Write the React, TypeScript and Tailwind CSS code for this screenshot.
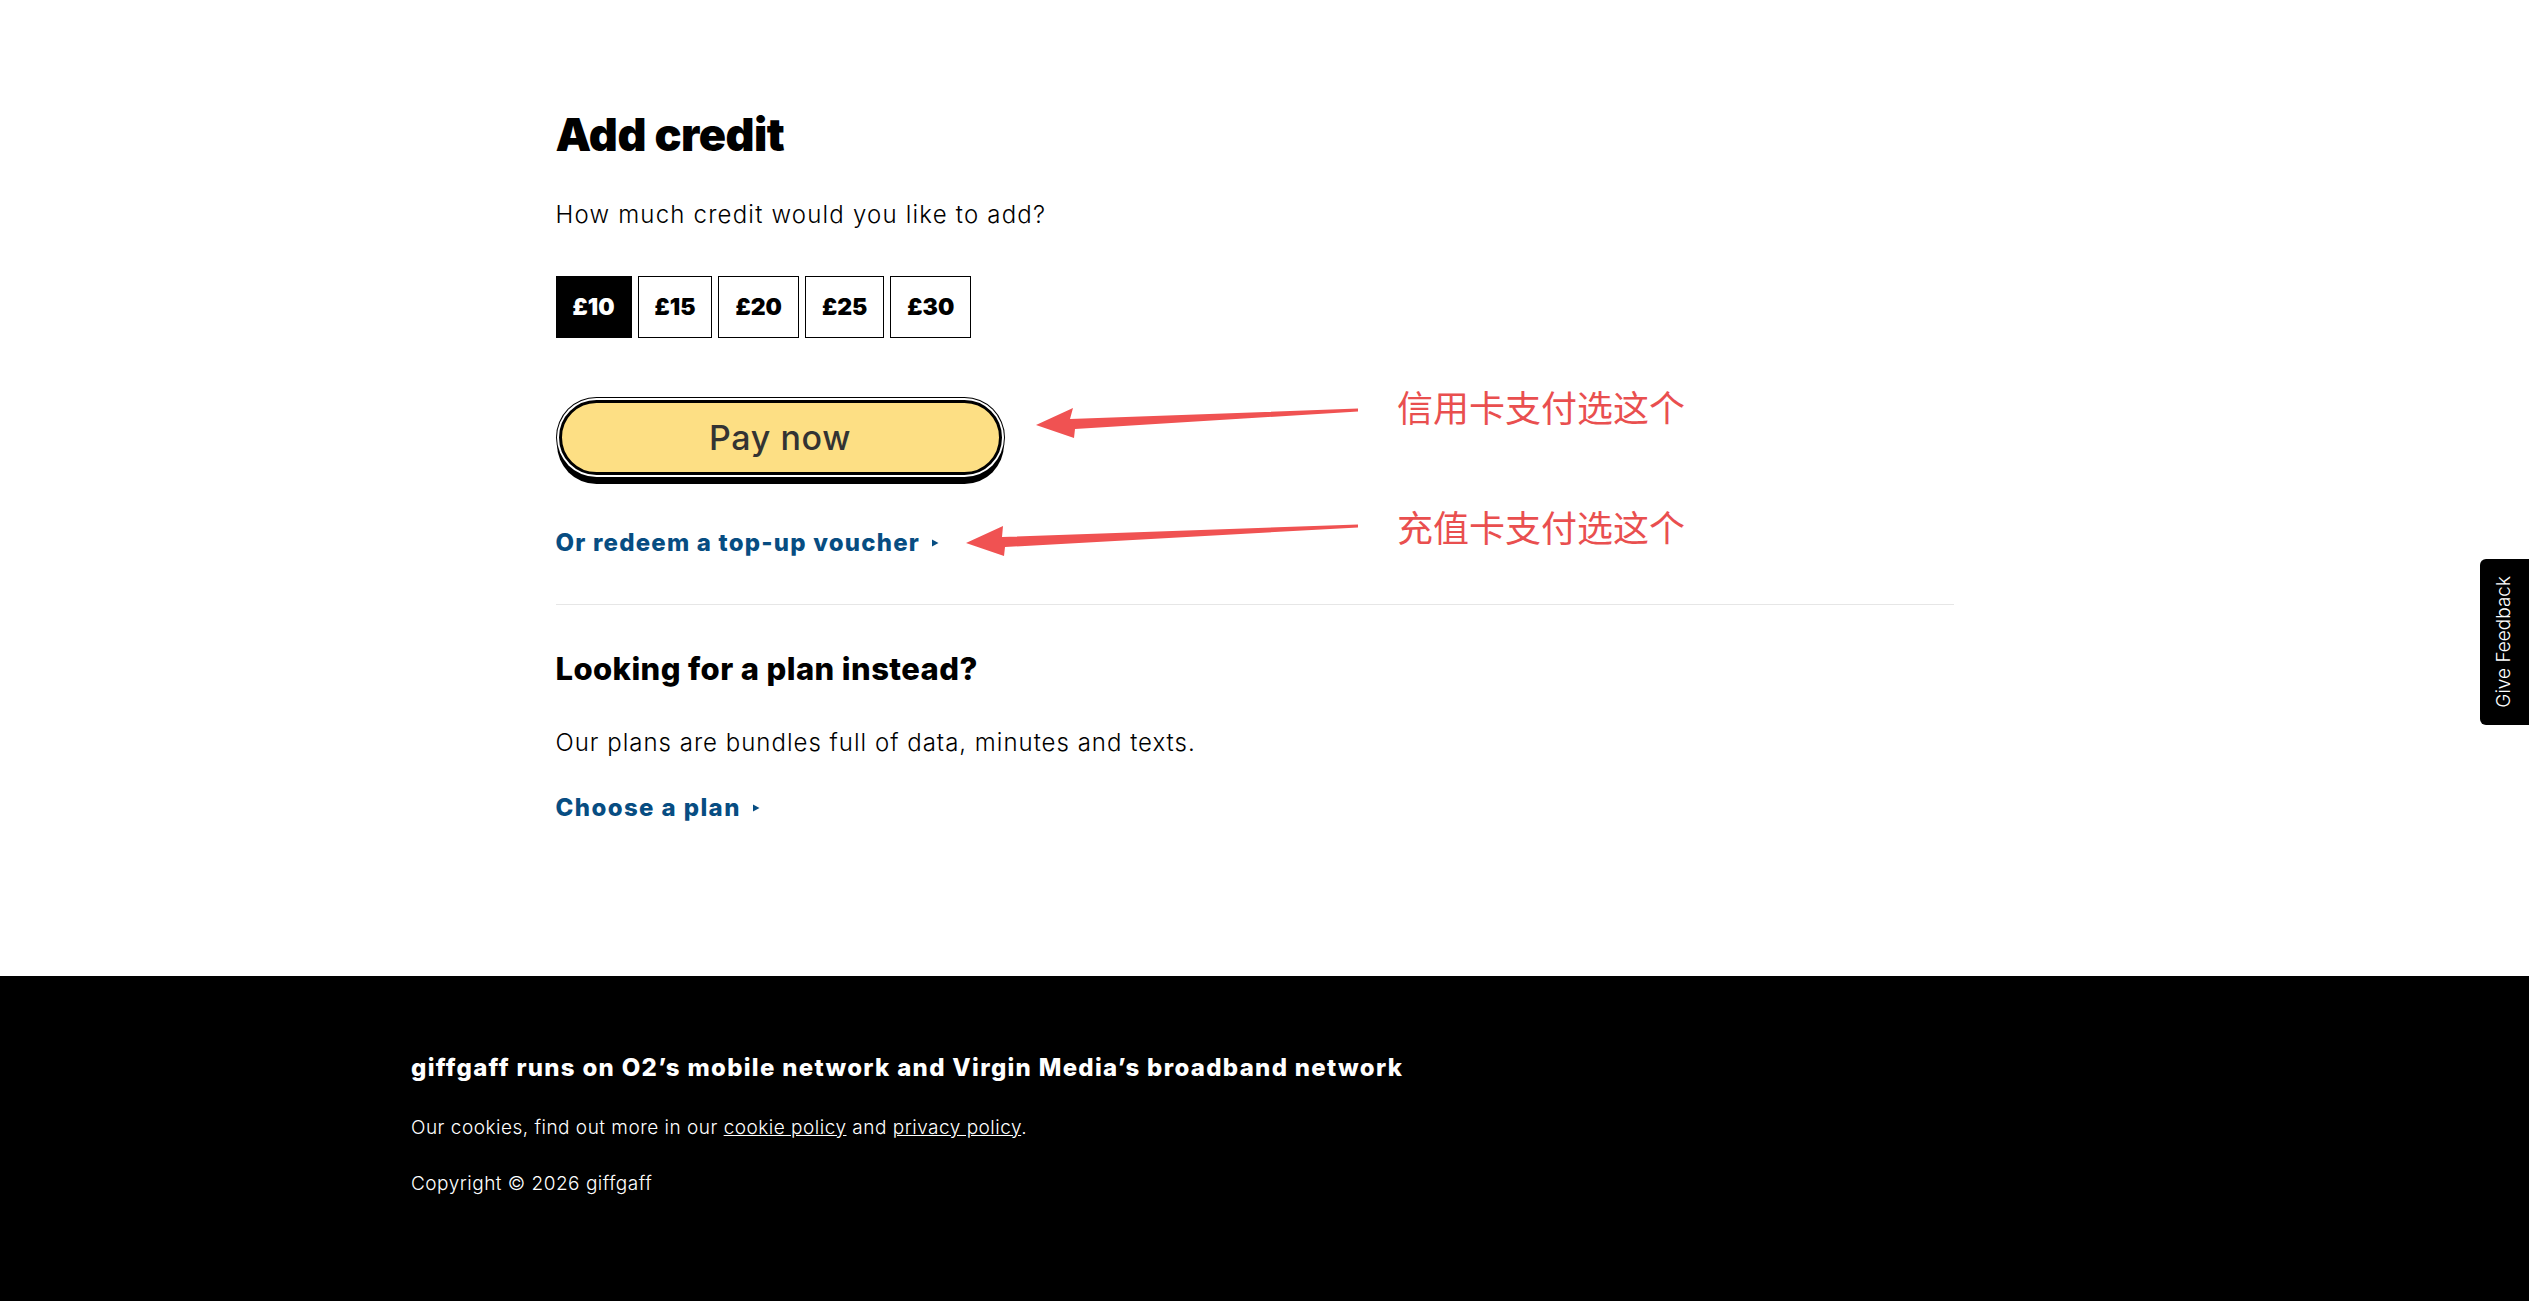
import { useState } from "react";

const amounts = [10, 15, 20, 25, 30];

function Caret() {
  return (
    <svg width="8" height="8" viewBox="0 0 8 8" className="ml-[11px] inline-block">
      <path d="M1 0.5 L7.5 4 L1 7.5 Z" fill="currentColor" />
    </svg>
  );
}

function Annotations() {
  // red arrows + notes that sit on top of the page
  return (
    <div className="pointer-events-none absolute left-0 top-0 w-[2529px] h-[976px]">
      <svg width="2529" height="976" className="absolute left-0 top-0">
        <polygon
          fill="#f05252"
          points="1036,425 1073,408 1070,419 1358,408.5 1358,411.5 1075,429 1074,438"
        />
        <polygon
          fill="#f05252"
          points="966,543 1003,526 1002,537 1358,524.5 1358,527.5 1005,547 1004,556"
        />
      </svg>
      <div className="absolute left-[1397px] top-[386px] text-[36px] leading-[40px] text-[#e94f4f] font-['Noto_Sans_CJK_SC',sans-serif]">
        信用卡支付选这个
      </div>
      <div className="absolute left-[1397px] top-[506px] text-[36px] leading-[40px] text-[#e94f4f] font-['Noto_Sans_CJK_SC',sans-serif]">
        充值卡支付选这个
      </div>
    </div>
  );
}

export default function App() {
  const [selected, setSelected] = useState(10);

  return (
    <div className="relative min-h-screen flex flex-col bg-white text-black font-['Inter',sans-serif]">
      <main className="flex-1 flex justify-center pr-[20px]">
        <div className="w-[1398px] pt-[107px] pb-[40px]">
          <h1 className="text-[45px] leading-[56px] font-black tracking-[-0.5px]">Add credit</h1>
          <p className="mt-[36px] text-[24px] leading-[32px] font-light tracking-[1.2px]">
            How much credit would you like to add?
          </p>

          <div className="mt-[45px] flex gap-[6px]">
            {amounts.map((a) => (
              <button
                key={a}
                onClick={() => setSelected(a)}
                className={
                  a === selected
                    ? "h-[62px] px-[16px] bg-black text-white text-[23px] font-black border border-black"
                    : "h-[62px] px-[16px] bg-white text-black text-[23px] font-black border border-black"
                }
              >
                £{a}
              </button>
            ))}
          </div>

          <div className="mt-[62px] pl-[3px]">
            <button className="w-[443px] h-[75px] rounded-full bg-[#fddf84] border-[3px] border-black text-[34px] font-medium tracking-[0.6px] text-[#333333] shadow-[0_0_0_2px_#fff,0_0_0_3px_#000,0_7px_0_2px_#000]">
              Pay now
            </button>
          </div>

          <a className="mt-[52px] flex items-center text-[24px] leading-[32px] font-extrabold tracking-[1.2px] text-[#074d82] cursor-pointer">
            Or redeem a top-up voucher
            <Caret />
          </a>

          <div className="mt-[45px] border-t border-[#e6e6e6]" />

          <h2 className="mt-[44px] text-[31px] leading-[40px] font-extrabold tracking-[0.4px]">
            Looking for a plan instead?
          </h2>
          <p className="mt-[38px] text-[24px] leading-[32px] font-light tracking-[1px]">
            Our plans are bundles full of data, minutes and texts.
          </p>
          <a className="mt-[33px] flex items-center text-[24px] leading-[32px] font-extrabold tracking-[1.4px] text-[#074d82] cursor-pointer">
            Choose a plan
            <Caret />
          </a>
        </div>
      </main>

      <footer className="h-[325px] bg-black text-white flex justify-center pr-[20px]">
        <div className="w-[1687px] pt-[76px]">
          <p className="text-[24px] leading-[32px] font-extrabold tracking-[1.3px]">
            giffgaff runs on O2’s mobile network and Virgin Media’s broadband network
          </p>
          <p className="mt-[30px] text-[19px] leading-[28px] font-light tracking-[0.5px]">
            Our cookies, find out more in our <a className="underline cursor-pointer">cookie policy</a> and{" "}
            <a className="underline cursor-pointer">privacy policy</a>.
          </p>
          <p className="mt-[28px] text-[19px] leading-[28px] font-light tracking-[0.5px]">Copyright © 2026 giffgaff</p>
        </div>
      </footer>

      <Annotations />

      <div className="absolute right-0 top-[559px] w-[49px] h-[166px] bg-black rounded-l-[6px] flex items-center justify-center">
        <span className="[writing-mode:vertical-rl] rotate-180 text-white text-[19px] font-light whitespace-nowrap">
          Give Feedback
        </span>
      </div>
    </div>
  );
}
